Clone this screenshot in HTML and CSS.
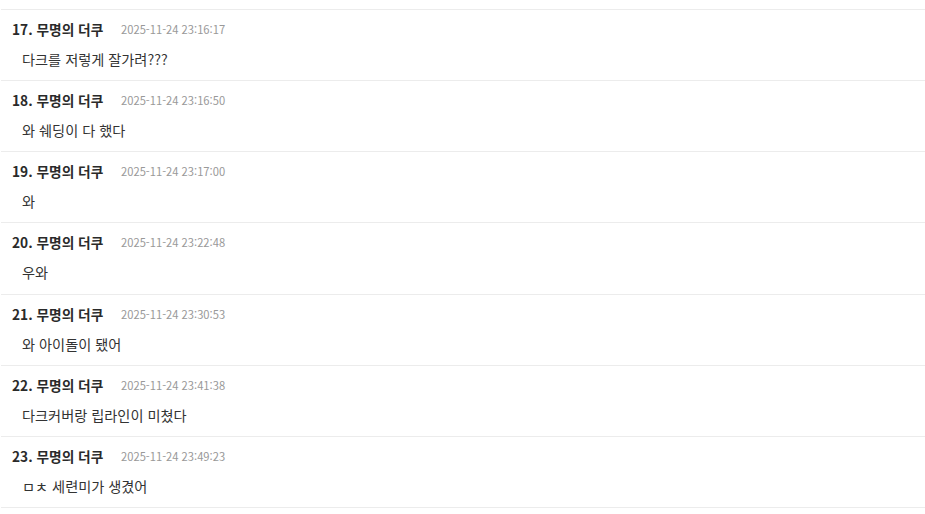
FILE: index.html
```html
<!DOCTYPE html>
<html lang="ko">
<head>
<meta charset="utf-8">
<link rel="stylesheet" href="styles.css">
</head>
<body>
<div class="list">
  <div class="item">
    <div class="head"><span class="name">17. 무명의 더쿠</span><span class="date">2025-11-24 23:16:17</span></div>
    <div class="body">다크를 저렇게 잘가려???</div>
  </div>
  <div class="item">
    <div class="head"><span class="name">18. 무명의 더쿠</span><span class="date">2025-11-24 23:16:50</span></div>
    <div class="body">와 쉐딩이 다 했다</div>
  </div>
  <div class="item">
    <div class="head"><span class="name">19. 무명의 더쿠</span><span class="date">2025-11-24 23:17:00</span></div>
    <div class="body">와</div>
  </div>
  <div class="item">
    <div class="head"><span class="name">20. 무명의 더쿠</span><span class="date">2025-11-24 23:22:48</span></div>
    <div class="body">우와</div>
  </div>
  <div class="item">
    <div class="head"><span class="name">21. 무명의 더쿠</span><span class="date">2025-11-24 23:30:53</span></div>
    <div class="body">와 아이돌이 됐어</div>
  </div>
  <div class="item">
    <div class="head"><span class="name">22. 무명의 더쿠</span><span class="date">2025-11-24 23:41:38</span></div>
    <div class="body">다크커버랑 립라인이 미쳤다</div>
  </div>
  <div class="item">
    <div class="head"><span class="name">23. 무명의 더쿠</span><span class="date">2025-11-24 23:49:23</span></div>
    <div class="body">ㅁㅊ 세련미가 생겼어</div>
  </div>
</div>
</body>
</html>
```
FILE: styles.css
```css
html, body {
  margin: 0;
  padding: 0;
  background: #fff;
}
body {
  font-family: "Noto Sans CJK KR", "Noto Sans", sans-serif;
  color: #333;
}
.list {
  margin-left: 1px;
  padding-top: 9px;
}
.list::before {
  content: "";
  display: block;
  border-top: 1px solid #ececec;
}
.item {
  box-sizing: border-box;
  height: 71.14px;
  border-bottom: 1px solid #ececec;
  padding: 9px 0 0 11px;
}
.head {
  display: flex;
  align-items: center;
  height: 20px;
  line-height: 20px;
}
.name {
  font-size: 13.7px;
  font-weight: 700;
  color: #2a2a2a;
  width: 109px;
  flex: none;
}
.date {
  font-size: 11.2px;
  color: #999;
}
.body {
  font-size: 14.2px;
  line-height: 20px;
  color: #333;
  padding-left: 10px;
  margin-top: 10px;
}
```
